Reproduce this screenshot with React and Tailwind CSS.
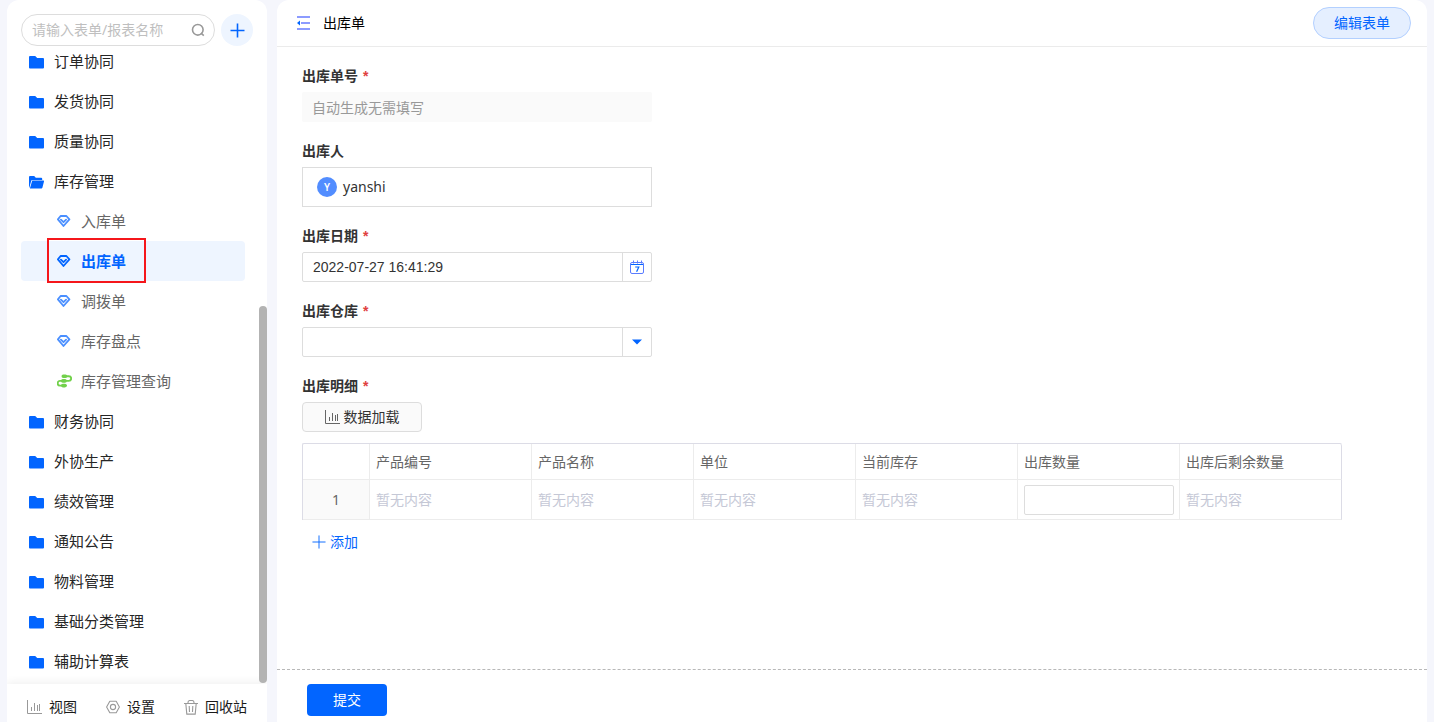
import React, { useState } from 'react';

const MENU = [
    { name: '订单协同' },
    { name: '发货协同' },
    { name: '质量协同' },
    {
        name: '库存管理',
        open: true,
        children: [
            { name: '入库单', type: 'form' },
            { name: '出库单', type: 'form', marked: true },
            { name: '调拨单', type: 'form' },
            { name: '库存盘点', type: 'form' },
            { name: '库存管理查询', type: 'flow' },
        ],
    },
    { name: '财务协同' },
    { name: '外协生产' },
    { name: '绩效管理' },
    { name: '通知公告' },
    { name: '物料管理' },
    { name: '基础分类管理' },
    { name: '辅助计算表' },
];

const COLUMNS = [
    { name: '产品编号' },
    { name: '产品名称' },
    { name: '单位' },
    { name: '当前库存' },
    { name: '出库数量', editable: true },
    { name: '出库后剩余数量' },
];

const FolderIcon = ({ open }) => (
    <svg width="15" height="13" viewBox="0 0 15 13" className="shrink-0 text-[#0265ff]" fill="currentColor">
        {open ? (
            <>
                <path d="M0 1A1 1 0 0 1 1 0h4.2l1.6 1.7h5.4a1 1 0 0 1 1 1V4H3.2a1 1 0 0 0-.95.7L.3 11.8a1 1 0 0 1-.3-.8z" />
                <path d="M3.2 4.5h11.1a.7.7 0 0 1 .68.9l-1.6 6.4a1 1 0 0 1-.95.7H.9z" />
            </>
        ) : (
            <path d="M0 1A1 1 0 0 1 1 0h5.2l2 2H14a1 1 0 0 1 1 1v8.5a1 1 0 0 1-1 1H1a1 1 0 0 1-1-1z" />
        )}
    </svg>
);

const DiamondIcon = () => (
    <svg width="14" height="13" viewBox="0 0 14 13" className="shrink-0" fill="none" stroke="currentColor" strokeWidth="1.8" strokeLinejoin="round" strokeLinecap="round">
        <path d="M3.6 1h5.8l3 3.4-5.9 6.6L.9 4.4z" />
        <path d="M3.9 4.6l2.6 2.6 2.6-2.6" />
    </svg>
);

const FlowIcon = () => (
    <svg width="15" height="14" viewBox="0 0 15 14" className="shrink-0 text-[#72d14b]" fill="none" stroke="currentColor" strokeWidth="1.9" strokeLinecap="round">
        <path d="M6 2.2h5.8a2.3 2.3 0 0 1 0 4.7H3a2.3 2.3 0 0 0 0 4.7h6" />
        <path d="M6.3 2.2h2.2M5.8 6.9H8M5.8 11.6H8" strokeWidth="3.6" />
    </svg>
);

const ChartIcon = () => (
    <svg width="15" height="14" viewBox="0 0 15 14" className="shrink-0" fill="none" stroke="currentColor">
        <path d="M.5 0v13.5H15M4.5 7v4M7.5 3v8M10.5 5v6M12.5 4v7" />
    </svg>
);

const HexIcon = () => (
    <svg width="14" height="14" viewBox="0 0 14 14" className="shrink-0" fill="none" stroke="currentColor" strokeWidth="1.1">
        <path d="M3.8 1.2h6.4L13.4 7l-3.2 5.8H3.8L.6 7z" strokeLinejoin="round" />
        <circle cx="7" cy="7" r="2.6" />
    </svg>
);

const TrashIcon = () => (
    <svg width="14" height="15" viewBox="0 0 14 15" className="shrink-0" fill="none" stroke="currentColor" strokeWidth="1.1">
        <path d="M0 3.5h14M4 3.5v-1a2 2 0 0 1 2-2h2a2 2 0 0 1 2 2v1M1.8 3.5l1 10.6h8.4l1-10.6M5.2 6l.3 6M8.8 6l-.3 6" />
    </svg>
);

const CalendarIcon = () => (
    <svg width="15" height="15" viewBox="0 0 15 15" fill="none" stroke="#5a7cff">
        <rect x=".5" y="2.5" width="13" height="11" rx="1.5" />
        <path d="M1 4.5h12" stroke="#0265ff" />
        <path d="M3.5 .5v3M7.5 .5v3M11.5 .5v3" />
        <path d="M5.2 7h3.6L6.6 11.8" stroke="#0265ff" strokeWidth="1.2" />
    </svg>
);

const PlusIcon = ({ size, width = 1 }) => (
    <svg width={size} height={size} viewBox="0 0 15 15" fill="none" stroke="currentColor" strokeWidth={width} className="shrink-0">
        <path d="M7.5 .5v14M.5 7.5h14" />
    </svg>
);

const Label = ({ children, required, ...rest }) => (
    <label className="block h-5 mb-1.5 leading-5 font-bold text-[#333]" {...rest}>
        {children}
        {required && <span className="ml-[5px] font-['Liberation_Sans',sans-serif] text-[#e04040]">*</span>}
    </label>
);

const Sidebar = ({ active, onSelect }) => (
    <aside className="relative flex w-[260px] shrink-0 flex-col overflow-hidden rounded-t-xl bg-white">
        <div className="z-10 flex h-[41px] shrink-0 items-start gap-1.5 px-3.5 pt-3.5">
            <div className="flex h-8 w-[194px] shrink-0 items-center rounded-full border border-[#ddd] bg-white pl-2.5 pr-[9px]">
                <input
                    type="text"
                    aria-label="搜索"
                    placeholder="请输入表单/报表名称"
                    className="min-w-0 flex-1 bg-transparent placeholder:text-[#bfbfbf] outline-none"
                />
                <svg width="14" height="14" viewBox="0 0 14 14" fill="none" stroke="#999" strokeWidth="1.6">
                    <circle cx="6.8" cy="6.8" r="5.3" />
                    <path d="M10 10.2l2.8 2.4" />
                </svg>
            </div>
            <button aria-label="新建" className="flex size-8 shrink-0 items-center justify-center rounded-full bg-[#eef5ff] text-[#0265ff]">
                <PlusIcon size={15} width={1.6} />
            </button>
        </div>

        <nav className="min-h-0 flex-1 pl-3.5 pr-[22px] text-[15px]">
            {MENU.map((group) => (
                <div key={group.name}>
                    <button className="flex h-10 w-full items-center gap-2.5 pl-2 pt-0.5 text-[#262626]">
                        <FolderIcon open={group.open} />
                        {group.name}
                    </button>
                    {group.children?.map((item) => {
                        const isActive = item.name === active;
                        return (
                            <button
                                key={item.name}
                                onClick={() => onSelect(item.name)}
                                className={
                                    isActive
                                        ? 'relative flex h-10 w-full items-center rounded bg-[#eef5ff] pl-9 font-bold text-[#0265ff]'
                                        : 'relative flex h-10 w-full items-center rounded pl-9 text-[#666]'
                                }
                            >
                                <span className={isActive ? 'w-6' : 'w-6 text-[#4a8fff]'}>
                                    {item.type === 'flow' ? <FlowIcon /> : <DiamondIcon />}
                                </span>
                                <span className="pt-0.5">{item.name}</span>
                                {item.marked && <span className="absolute -top-[3px] left-[26px] h-[45px] w-[99px] border-2 border-[#f5161b]" />}
                            </button>
                        );
                    })}
                </div>
            ))}
        </nav>

        {/* scrollbar thumb */}
        <div className="absolute bottom-[39px] right-0 h-[377px] w-2 rounded-full bg-[#b3b3b3]" />

        <footer className="flex h-[38px] shrink-0 items-center gap-[29px] pl-5 pt-2 text-[#999] shadow-[0_-2px_8px_rgba(0,0,0,0.06)]">
            <button className="flex items-center gap-[7px]">
                <ChartIcon />
                <span className="text-[#1a1a1a]">视图</span>
            </button>
            <button className="flex items-center gap-[7px]">
                <HexIcon />
                <span className="text-[#1a1a1a]">设置</span>
            </button>
            <button className="flex items-center gap-[7px]">
                <TrashIcon />
                <span className="text-[#1a1a1a]">回收站</span>
            </button>
        </footer>
    </aside>
);

const DetailTable = () => (
    <table className="mt-[11px] w-[1040px] table-fixed border-separate border-spacing-0 rounded-t-xs border-l border-t border-[#dcdce6] text-left text-[#666]">
        <thead>
            <tr className="h-9">
                <th className="w-[67px] border-b border-r border-[#ececec]" aria-label="序号" />
                {COLUMNS.map((col) => (
                    <th key={col.name} className="border-b border-r border-[#ececec] px-1.5 py-0 font-normal last:rounded-tr-xs last:border-r-[#dcdce6]">
                        {col.name}
                    </th>
                ))}
            </tr>
        </thead>
        <tbody>
            <tr className="h-10">
                <td className="border-b border-r border-[#ececec] bg-[#fafafa] p-0 text-center">1</td>
                {COLUMNS.map((col) => (
                    <td key={col.name} className="border-b border-r border-[#ececec] px-1.5 py-0 text-[#c5c8d6] last:border-r-[#dcdce6]">
                        {col.editable ? (
                            <input type="text" aria-label={col.name} className="block h-[30px] w-[150px] rounded-xs border border-[#ddd] px-2 text-[#333]" />
                        ) : (
                            '暂无内容'
                        )}
                    </td>
                ))}
            </tr>
        </tbody>
    </table>
);

const App = () => {
    const [active, setActive] = useState('出库单');
    const [date, setDate] = useState('2022-07-27 16:41:29');

    return (
        <div className="flex h-screen gap-2.5 overflow-hidden bg-[#f5f6fc] px-[7px] font-['Noto_Sans','Noto_Sans_CJK_SC',sans-serif] text-sm text-[#333]">
            <Sidebar active={active} onSelect={setActive} />

            <main className="flex min-w-0 flex-1 flex-col rounded-t-xl bg-white">
                <header className="flex h-[47px] shrink-0 items-center border-b border-[#ebebeb] pl-[19px] pr-4">
                    <button aria-label="收起菜单" className="mr-[13px]">
                        <svg width="14" height="14" viewBox="0 0 14 14" fill="none" stroke="#8c9bff" strokeWidth="2">
                            <path d="M1 1h13M5 7h9M1 13h13" />
                            <path d="M1 7l3-2.4v4.8z" fill="#0265ff" stroke="none" />
                        </svg>
                    </button>
                    <h1 className="text-black">{active}</h1>
                    <button className="ml-auto h-8 w-[98px] rounded-full border border-[#b3d0ff] bg-[#e5efff] text-[#0265ff]">编辑表单</button>
                </header>

                <form className="flex min-h-0 flex-1 flex-col gap-[19px] pl-[25px] pt-[19px]" onSubmit={(e) => e.preventDefault()}>
                    <div>
                        <Label htmlFor="code" required>出库单号</Label>
                        <input
                            id="code"
                            readOnly
                            placeholder="自动生成无需填写"
                            className="block h-[30px] w-[350px] rounded-xs bg-[#fafafa] px-2.5 placeholder:text-[#999]"
                        />
                    </div>

                    <div>
                        <Label htmlFor="person">出库人</Label>
                        <button id="person" type="button" className="flex h-10 w-[350px] items-center gap-1.5 border border-[#ddd] pl-3.5">
                            <span className="flex size-5 items-center justify-center rounded-full bg-[#528dff] text-[10px] font-semibold text-white">Y</span>
                            yanshi
                        </button>
                    </div>

                    <div>
                        <Label htmlFor="date" required>出库日期</Label>
                        <div className="flex h-[30px] w-[350px] rounded-xs border border-[#ddd]">
                            <input
                                id="date"
                                type="text"
                                value={date}
                                onChange={(e) => setDate(e.target.value)}
                                className="min-w-0 flex-1 px-2.5 font-['Liberation_Sans',sans-serif] outline-none"
                            />
                            <button type="button" aria-label="选择日期" className="flex w-[29px] items-center justify-center border-l border-[#ddd]">
                                <CalendarIcon />
                            </button>
                        </div>
                    </div>

                    <div>
                        <Label htmlFor="warehouse" required>出库仓库</Label>
                        <div className="flex h-[30px] w-[350px] rounded-xs border border-[#ddd]">
                            <select id="warehouse" className="min-w-0 flex-1 appearance-none px-2.5 outline-none" />
                            <span className="pointer-events-none flex w-[29px] items-center justify-center border-l border-[#ddd]">
                                <svg width="10" height="6" viewBox="0 0 10 6" fill="#0265ff">
                                    <path d="M0 .5h10L5 5.5z" />
                                </svg>
                            </span>
                        </div>
                    </div>

                    <div>
                        <Label htmlFor="load" required>出库明细</Label>
                        <button id="load" type="button" className="flex h-[30px] w-[120px] items-center justify-center gap-1 rounded border border-[#ddd] bg-[#fafafa]">
                            <span className="text-[#666]">
                                <ChartIcon />
                            </span>
                            数据加载
                        </button>
                        <DetailTable />
                        <button type="button" className="ml-2.5 mt-3 flex items-center gap-1 text-[#0265ff]">
                            <PlusIcon size={14} />
                            添加
                        </button>
                    </div>
                </form>

                <footer className="h-[53px] shrink-0 border-t border-dashed border-[#b8b8b8] pl-[30px] pt-3.5">
                    <button type="submit" className="h-8 w-20 rounded bg-[#0265ff] text-white">提交</button>
                </footer>
            </main>
        </div>
    );
};

export default App;
